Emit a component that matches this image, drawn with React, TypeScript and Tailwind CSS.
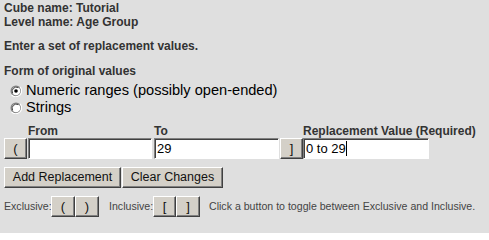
import React from "react";

function Btn({ children, w, h, cls = "" }: { children: React.ReactNode; w: string; h: string; cls?: string }) {
  return (
    <div
      className={`${w} ${h} ${cls} flex items-center justify-center bg-[#d4d0c8] border border-t-white border-l-white border-r-[#404040] border-b-[#404040] shadow-[inset_-1px_-1px_0_#808080] text-[#111]`}
    >
      {children}
    </div>
  );
}

function Field({ w, children }: { w: string; children?: React.ReactNode }) {
  return (
    <div
      className={`${w} h-[21px] bg-white border border-t-[#808080] border-l-[#808080] border-r-white border-b-white shadow-[inset_1px_1px_0_#404040] flex items-center pl-[2px] text-[13px] text-black`}
    >
      {children}
    </div>
  );
}

function Radio({ checked }: { checked?: boolean }) {
  return (
    <svg width="12" height="12" viewBox="0 0 12 12" className="shrink-0">
      <circle cx="6" cy="6" r="5.5" fill="#808080" />
      <path d="M1.5 9.9 A5.5 5.5 0 0 0 10 1.9" stroke="#ffffff" strokeWidth="1.2" fill="none" />
      <circle cx="6" cy="6" r="4.3" fill="#ffffff" />
      <path d="M2.6 8.4 A4.3 4.3 0 0 1 8.4 2.6" stroke="#404040" strokeWidth="1" fill="none" />
      {checked && <circle cx="6" cy="6" r="1.8" fill="#000" />}
    </svg>
  );
}

export default function App() {
  return (
    <div className="w-[489px] h-[233px] bg-[#dfdfdf] font-['Liberation_Sans',Arial,sans-serif] text-[#333] pl-[4px] pt-[1px] overflow-hidden">
      <div className="font-bold text-[12px] leading-[14px]">Cube name: Tutorial</div>
      <div className="font-bold text-[12px] leading-[14px]">Level name: Age Group</div>
      <div className="font-bold text-[12px] leading-[14px] mt-[10px]">Enter a set of replacement values.</div>
      <div className="font-bold text-[12px] leading-[14px] mt-[11px]">Form of original values</div>
      <div className="flex items-center gap-[4px] pl-[6px] text-[14.6px] leading-[17px] text-black mt-[4px]">
        <Radio checked />
        <span>Numeric ranges (possibly open-ended)</span>
      </div>
      <div className="flex items-center gap-[4px] pl-[6px] text-[14.6px] leading-[17px] text-black">
        <Radio />
        <span>Strings</span>
      </div>
      <div className="flex font-bold text-[12px] leading-[14px] mt-[8px]">
        <div className="w-[24px]" />
        <div className="w-[126px]">From</div>
        <div className="w-[149px]">To</div>
        <div>Replacement Value (Required)</div>
      </div>
      <div className="flex">
        <Btn w="w-[23px]" h="h-[21px]" cls="text-[13px]">(</Btn>
        <div className="ml-[1px]">
          <Field w="w-[124px]" />
        </div>
        <div className="ml-[2px]">
          <Field w="w-[125px]">29</Field>
        </div>
        <Btn w="w-[23px]" h="h-[21px]" cls="ml-[1px] text-[13px]">]</Btn>
        <Field w="w-[126px]">
          <span>0 to 29</span>
          <span className="w-[1px] h-[15px] bg-black" />
        </Field>
      </div>
      <div className="flex mt-[8px] text-[12.5px]">
        <Btn w="w-[117px]" h="h-[21px]">Add Replacement</Btn>
        <Btn w="w-[101px]" h="h-[21px]" cls="ml-[1px]">Clear Changes</Btn>
      </div>
      <div className="flex items-center mt-[8px] text-[10.6px] text-[#444]">
        <span className="w-[47px]">Exclusive:</span>
        <Btn w="w-[24px]" h="h-[21px]" cls="text-[13px]">(</Btn>
        <Btn w="w-[24px]" h="h-[21px]" cls="text-[13px]">)</Btn>
        <span className="ml-[10px] w-[44px]">Inclusive:</span>
        <Btn w="w-[23px]" h="h-[21px]" cls="text-[13px]">[</Btn>
        <Btn w="w-[24px]" h="h-[21px]" cls="text-[13px]">]</Btn>
        <span className="ml-[9px]">Click a button to toggle between Exclusive and Inclusive.</span>
      </div>
    </div>
  );
}
